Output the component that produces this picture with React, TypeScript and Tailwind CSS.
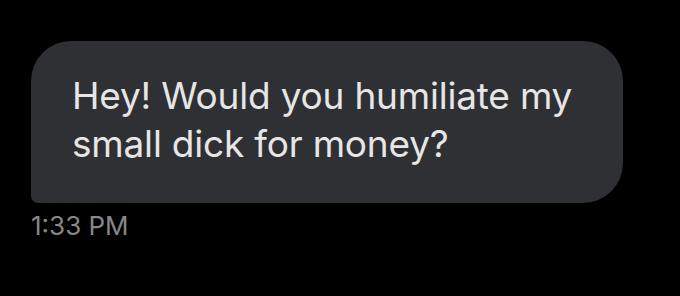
import React from "react";

export default function App() {
  return (
    <div className="w-[680px] h-[296px] bg-black pl-[31px] pt-[41px] font-['Inter',sans-serif]">
      <div className="w-[592px] h-[162px] bg-[#2f3034] rounded-[40px] rounded-bl-[7px] pl-[41px] pt-[31px]">
        <p className="text-[37px] leading-[48px] text-[#e6e6e6] tracking-[-0.2px]">
          Hey! Would you humiliate my
          <br />
          small dick for money?
        </p>
      </div>
      <p className="mt-[7px] text-[26px] leading-[32px] text-[#86878a]">1:33 PM</p>
    </div>
  );
}
